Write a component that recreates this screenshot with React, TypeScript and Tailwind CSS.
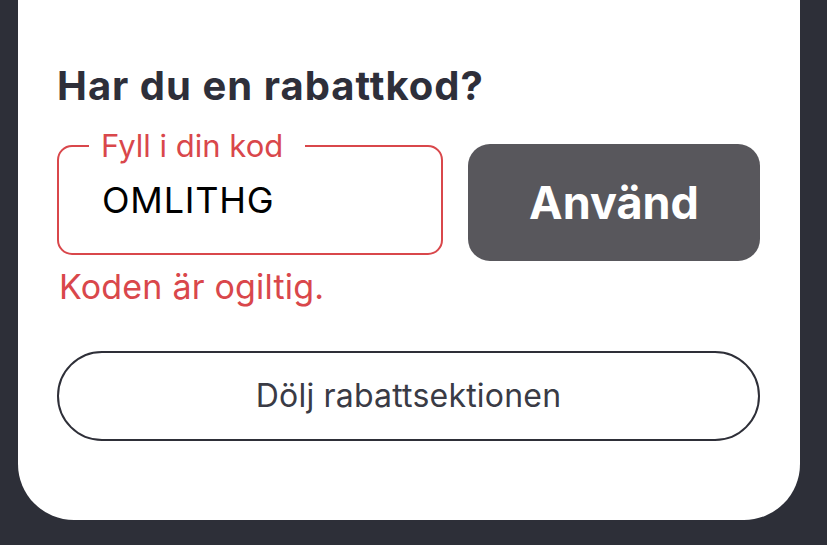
export default function App() {
  return (
    <div className="w-[827px] h-[545px] bg-[#2d2f38] overflow-hidden pl-[18px] pr-[27px]" style={{ fontFamily: 'Inter, "Noto Sans", sans-serif' }}>
      <div className="bg-white h-[520px] rounded-b-[56px] px-[39px] pt-[64px] flex flex-col">
        <h2 className="text-[40px] leading-[44px] font-bold text-[#2e2f3a] tracking-[1px]">Har du en rabattkod?</h2>

        <div className="flex items-start gap-[25px] mt-[36px]">
          <div className="relative mt-[1px] w-[386px] h-[110px] border-2 border-[#d9474b] rounded-[15px] pl-[43px] pt-[33px]">
            <span className="absolute -top-[18px] left-[30px] bg-white pl-[12px] pr-[22px] text-[31px] leading-[34px] text-[#d9474b]">Fyll i din kod</span>
            <div className="text-[36px] leading-[40px] text-black tracking-[0.8px]">OMLITHG</div>
          </div>
          <button className="w-[292px] h-[117px] bg-[#58575c] rounded-[22px] text-white text-[45px] font-bold">
            Använd
          </button>
        </div>

        <p className="text-[34px] leading-[40px] text-[#d9474b] mt-[6px] ml-[2px] tracking-[0.2px]">Koden är ogiltig.</p>

        <button className="mt-[44px] h-[90px] w-[703px] border-2 border-[#2e2f38] rounded-full text-[32px] text-[#3a3b45] tracking-[0.2px]">
          Dölj rabattsektionen
        </button>
      </div>
    </div>
  );
}
